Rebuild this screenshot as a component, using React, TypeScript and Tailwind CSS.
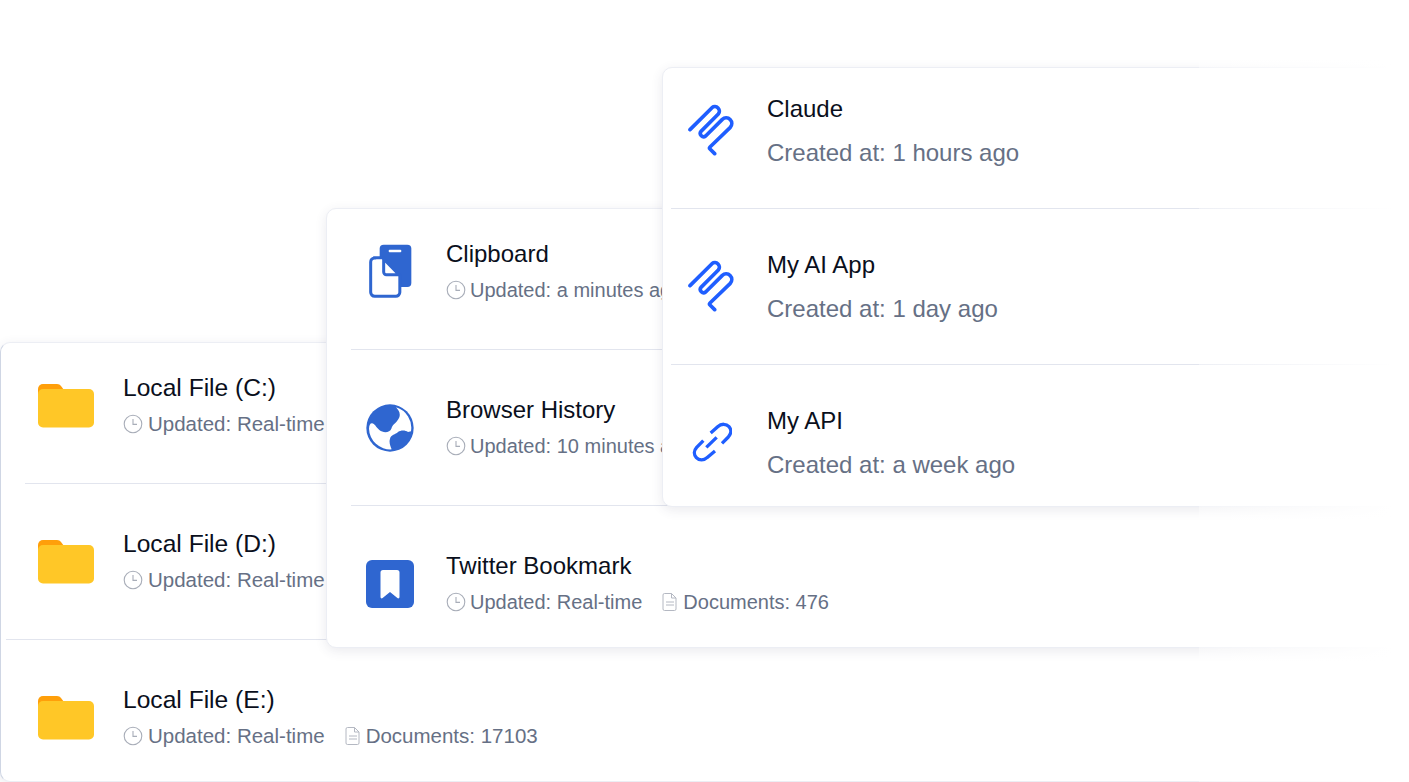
import React from "react";

const font = { fontFamily: '"Liberation Sans", Arial, sans-serif' };

function Clock() {
  return (
    <svg width="20" height="20" viewBox="0 0 20 20" fill="none" className="shrink-0">
      <circle cx="10" cy="10" r="8.8" stroke="#a8adb8" strokeWidth="1.1" />
      <path d="M10 5v5.4h4" stroke="#a8adb8" strokeWidth="1.1" />
    </svg>
  );
}

function Doc() {
  return (
    <svg width="16" height="20" viewBox="0 0 16 20" fill="none" className="shrink-0">
      <path d="M2.5 1.500h7l4.500 4.500v11a1.500 1.500 0 0 1-1.500 1.500h-10A1.500 1.500 0 0 1 1 17V3a1.500 1.500 0 0 1 1.500-1.500z" stroke="#b4b8c2" strokeWidth="1" />
      <path d="M9.500 1.500V6H14M4 10h8M4 13h8" stroke="#b4b8c2" strokeWidth="1" />
    </svg>
  );
}

function Folder() {
  return (
    <svg width="58" height="46" viewBox="0 0 58 46" className="shrink-0">
      <path d="M1 7a5 5 0 0 1 5-5h14c2 0 3 .8 4 2l3 4v10H1z" fill="#ff9f0a" />
      <rect x="1" y="7" width="56" height="38.500" rx="5" fill="#ffc727" />
    </svg>
  );
}

function ClipIcon() {
  return (
    <svg width="45" height="56.670" viewBox="145 130 135 170" className="shrink-0">
      <rect x="180" y="135" width="95" height="127" rx="12" fill="#2f66d0" />
      <rect x="207" y="150" width="38" height="8" rx="3" fill="#fff" />
      <path d="M165 174.500H190L240.500 225V278a12 12 0 0 1-12 12H165a12 12 0 0 1-12-12V187a12 12 0 0 1 12-12z" fill="#fff" stroke="#2f66d0" strokeWidth="9" />
      <path d="M192 178V217a8 8 0 0 0 8 8H238z" fill="#fff" stroke="#2f66d0" strokeWidth="9" strokeLinejoin="round" />
    </svg>
  );
}

function Globe() {
  return (
    <svg width="48" height="48" viewBox="78 42 144 144" className="shrink-0 mt-[1px]">
      <circle cx="150" cy="114" r="71" fill="#2f66d0" />
      <path d="M168 52C176 60 182 70 178 82C172 98 158 102 154 116C150 128 130 130 118 120C108 112 104 100 96 100C90 100 88 106 87 116A64 64 0 0 0 155 178C152 170 146 158 150 146C153 134 166 134 174 126C182 120 196 120 204 126L213 124A64 64 0 0 0 168 52Z" fill="#fff" />
    </svg>
  );
}

function BookmarkIcon() {
  return (
    <svg width="48" height="48" viewBox="0 0 48 48" className="shrink-0 mt-[1px]">
      <rect width="48" height="48" rx="6" fill="#2f66d0" />
      <path d="M17 10h14a2.500 2.500 0 0 1 2.500 2.500v24.500c0 1.200-1.200 1.800-2.100 1.100L24 32l-7.400 6.100c-.9.700-2.100.1-2.100-1.100V12.500A2.500 2.500 0 0 1 17 10z" fill="#fff" />
    </svg>
  );
}

function Paperclip() {
  return (
    <svg width="46.670" height="52" viewBox="50 40 140 156" fill="none" className="shrink-0 -mt-[3px]">
      <path
        d="M59 117L125 51A13.500 13.500 0 0 1 144 70L92 122A10 10 0 0 0 106 136L156 86A17 17 0 0 1 180 110L119 169Q116 172 119 175L133 189"
        stroke="#1f5eff"
        strokeWidth="11"
        strokeLinecap="round"
        strokeLinejoin="round"
      />
    </svg>
  );
}

function LinkIcon() {
  return (
    <svg width="40" height="40" viewBox="65 65 120 120" fill="none" className="shrink-0 -mt-[3px]">
      <path d="M121 98l21-19c11-10 26-9 34 0s7 21-2 31l-19 19M108 141l31-30M99 121l-20 20c-9 10-9 22-1 31s23 9 32 0l24-20" stroke="#1f5eff" strokeWidth="10" />
    </svg>
  );
}

type RowProps = {
  icon: React.ReactNode;
  iconBox: string;
  title: string;
  pad: string;
  divider?: string;
  large?: boolean;
  wide?: boolean;
  updated?: string;
  docs?: string;
  sub?: string;
};

function Row({ icon, iconBox, title, pad, divider, large, wide, updated, docs, sub }: RowProps) {
  return (
    <div>
      <div className={`flex items-center ${pad}`}>
        <div className={`flex items-center shrink-0 ${iconBox}`}>{icon}</div>
        <div className={`flex flex-col ${large ? "gap-3" : "gap-[6px]"}`}>
          <div className={`leading-8 text-[#0a0f1c] whitespace-nowrap ${wide ? "text-[24.6px]" : "text-2xl"}`}>{title}</div>
          {large ? (
            <div className="text-2xl leading-8 text-[#667085] whitespace-nowrap">{sub}</div>
          ) : (
            <div className={`flex items-center h-7 leading-7 text-[#667085] whitespace-nowrap ${wide ? "text-[20.5px]" : "text-[20px]"}`}>
              <Clock />
              <span className={wide ? "ml-[5px]" : "ml-[4px]"}>{updated}</span>
              {docs && (
                <>
                  <span className="ml-5"><Doc /></span>
                  <span className="ml-[5px]">{docs}</span>
                </>
              )}
            </div>
          )}
        </div>
      </div>
      {divider && <div className={`h-px bg-[#e2e5ee] ${divider}`} />}
    </div>
  );
}

const cardCls =
  "absolute bg-white rounded-[10px] border border-[#eceef4] shadow-[0_3px_12px_rgba(60,65,100,0.11)] overflow-hidden";

export default function App() {
  return (
    <div className="relative w-[1409px] h-[782px] overflow-hidden bg-white" style={font}>
      <div className={`${cardCls} left-0 top-[342px] w-[1409px] border-l-[#cfd6e4]`}>
        <Row wide icon={<Folder />} iconBox="w-[122px] pl-[36px]" title="Local File (C:)" pad="pt-[29px] pb-[45px]" divider="ml-6" updated="Updated: Real-time" />
        <Row wide icon={<Folder />} iconBox="w-[122px] pl-[36px]" title="Local File (D:)" pad="pt-[44px] pb-[45px]" divider="ml-[5px]" updated="Updated: Real-time" />
        <Row wide icon={<Folder />} iconBox="w-[122px] pl-[36px]" title="Local File (E:)" pad="pt-[44px] pb-[31px]" updated="Updated: Real-time" docs="Documents: 17103" />
      </div>
      <div className={`${cardCls} left-[326px] top-[208px] w-[1100px]`}>
        <Row icon={<ClipIcon />} iconBox="w-[119px] pl-[41px]" title="Clipboard" pad="pt-[29px] pb-[45px]" divider="ml-6" updated="Updated: a minutes ago" />
        <Row icon={<Globe />} iconBox="w-[119px] pl-[39px]" title="Browser History" pad="pt-[44px] pb-[45px]" divider="ml-6" updated="Updated: 10 minutes ago" />
        <Row icon={<BookmarkIcon />} iconBox="w-[119px] pl-[39px]" title="Twitter Bookmark" pad="pt-[44px] pb-[31px]" updated="Updated: Real-time" docs="Documents: 476" />
      </div>
      <div className={`${cardCls} left-[662px] top-[67px] w-[1100px]`}>
        <Row large icon={<Paperclip />} iconBox="w-[104px] pl-[24px]" title="Claude" pad="pt-[25px] pb-[39px]" divider="ml-2" sub="Created at: 1 hours ago" />
        <Row large icon={<Paperclip />} iconBox="w-[104px] pl-[24px]" title="My AI App" pad="pt-[40px] pb-[39px]" divider="ml-2" sub="Created at: 1 day ago" />
        <Row large icon={<LinkIcon />} iconBox="w-[104px] pl-[29px]" title="My API" pad="pt-[40px] pb-[25px]" sub="Created at: a week ago" />
      </div>
      <div className="absolute left-[1199px] right-0 top-0 bottom-0 bg-gradient-to-r from-white/40 to-white to-[92%]" />
    </div>
  );
}
